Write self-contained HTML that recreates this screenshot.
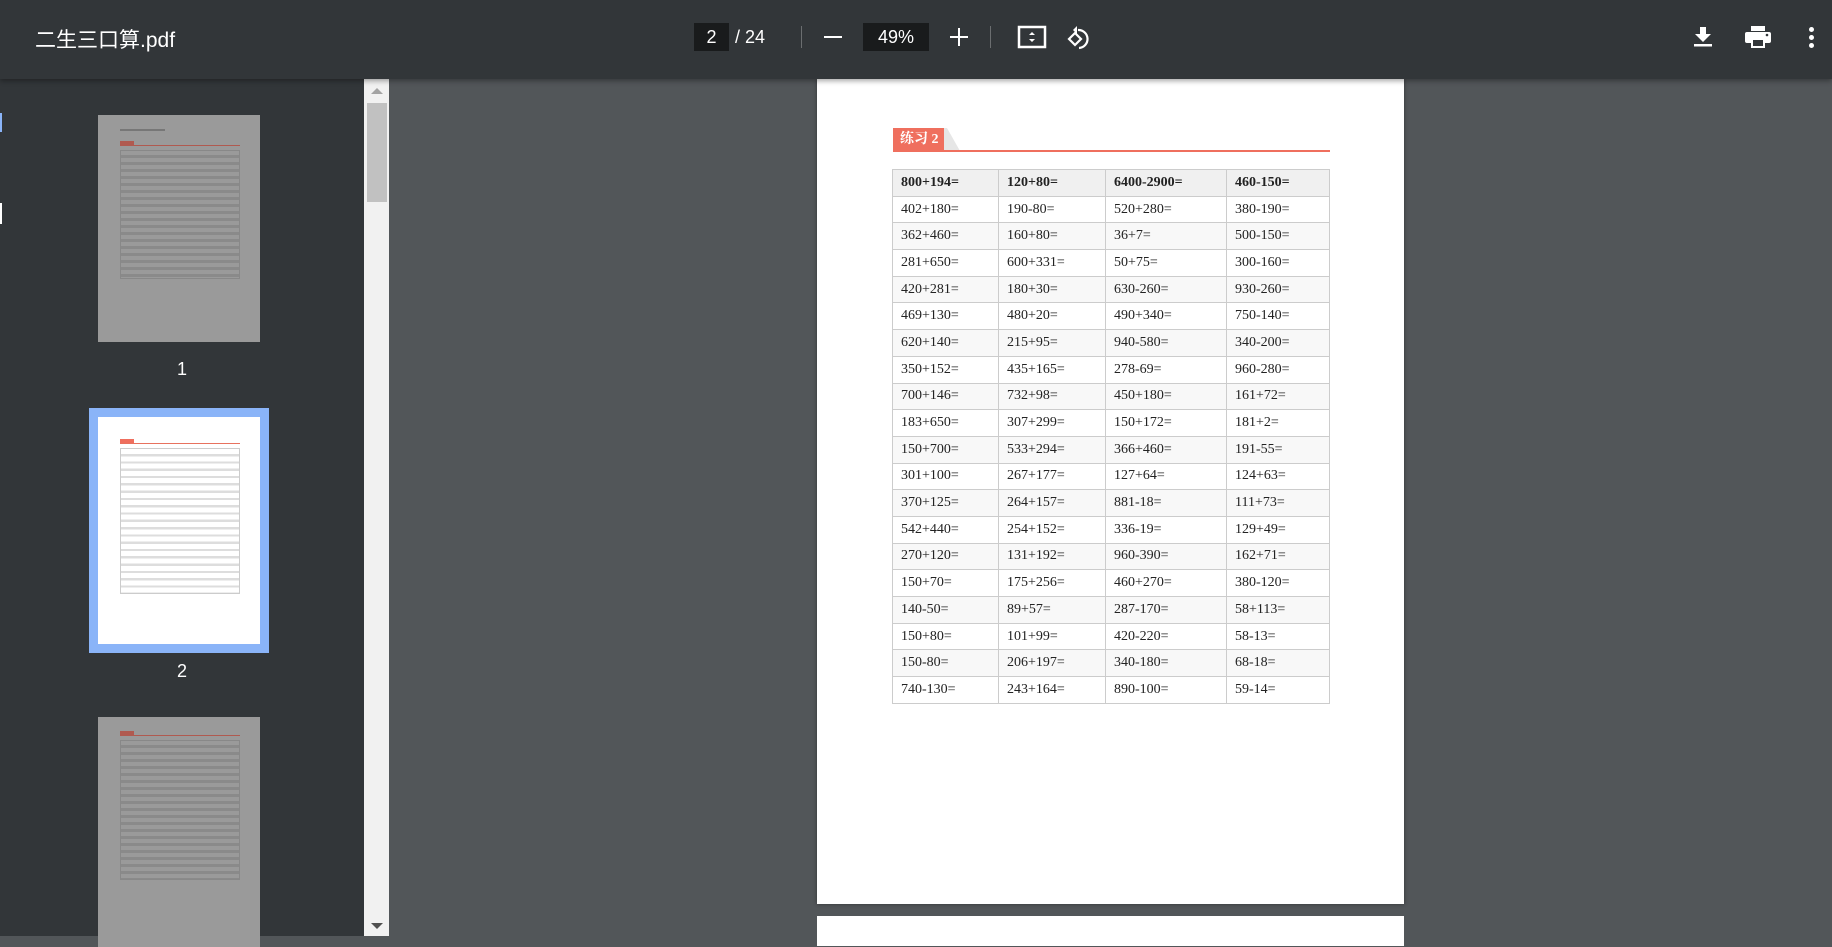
<!DOCTYPE html>
<html><head><meta charset="utf-8"><style>
*{margin:0;padding:0;box-sizing:border-box}
body{width:1832px;height:936px;overflow:hidden;background:#525659;font-family:"Liberation Sans","Noto Sans CJK SC",sans-serif;position:relative}
#tb{position:absolute;left:0;top:0;width:1832px;height:79px;background:#323639;color:#fff;z-index:5;box-shadow:0 2px 5px rgba(0,0,0,.35)}
.a{position:absolute}
#side{position:absolute;left:0;top:79px;width:364px;height:857px;background:#323639}
#sb{position:absolute;left:364px;top:79px;width:25px;height:857px;background:#f1f1f1}
.th{position:absolute;left:98px;width:162px;background:#9a9a9a}
.lines{position:absolute;left:22px;width:120px;background:repeating-linear-gradient(transparent 0,transparent 4px,#8a8a8a 4px,#8a8a8a 7px);border:1px solid #888}
.lbl{position:absolute;width:100%;left:0;text-align:center;color:#fff;font-size:18px}
#page{position:absolute;left:817px;top:79px;width:587px;height:825px;background:#fff;box-shadow:0 0 4px rgba(0,0,0,.4)}
table{position:absolute;left:75px;top:90px;width:438px;border-collapse:collapse;font-family:"Liberation Serif",serif;font-size:14px;color:#222}
td{border:1px solid #ccc;height:26.7px;padding:0 0 0 8px}
tr:nth-child(odd){background:#f8f8f8}
tr:first-child{background:#f0f0f0;font-weight:bold}
</style></head><body>
<div id="tb">
<div class="a" style="left:35px;top:24px;font-size:21px">二生三口算.pdf</div>
<div class="a" style="left:694px;top:23px;width:35px;height:28px;background:#191b1c;font-size:18px;text-align:center;line-height:28px">2</div>
<div class="a" style="left:735px;top:23px;font-size:18px;line-height:28px">/ 24</div>
<div class="a" style="left:801px;top:26px;width:1px;height:22px;background:#6b6e70"></div>
<div class="a" style="left:824px;top:36px;width:18px;height:2px;background:#fff"></div>
<div class="a" style="left:863px;top:23px;width:66px;height:28px;background:#191b1c;font-size:18px;text-align:center;line-height:28px">49%</div>
<div class="a" style="left:950px;top:36px;width:18px;height:2px;background:#fff"></div>
<div class="a" style="left:958px;top:28px;width:2px;height:18px;background:#fff"></div>
<div class="a" style="left:990px;top:26px;width:1px;height:22px;background:#6b6e70"></div>
<svg class="a" style="left:1017px;top:25px" width="30" height="24" viewBox="0 0 30 24"><rect x="2" y="2" width="26" height="20" fill="none" stroke="#fff" stroke-width="2.5"/><path d="M12 10l3-3 3 3zM12 14l3 3 3-3z" fill="#fff"/></svg>
<svg class="a" style="left:1065px;top:24px" width="30" height="28" viewBox="0 0 30 28"><path d="M4 15l6-6 6 6-6 6z" fill="none" stroke="#fff" stroke-width="2.2"/><path d="M13 6a9 9 0 1 1 1 18" fill="none" stroke="#fff" stroke-width="2.2"/><path d="M12 2v8h0l-4-4z" fill="#fff"/></svg>
<svg class="a" style="left:1693px;top:26px" width="20" height="22" viewBox="0 0 20 22"><path d="M7 1h6v7h5l-8 8-8-8h5z" fill="#fff"/><rect x="1" y="18" width="18" height="2.5" fill="#fff"/></svg>
<svg class="a" style="left:1744px;top:25px" width="28" height="24" viewBox="0 0 28 24"><rect x="7" y="1" width="14" height="5" fill="#fff"/><rect x="1" y="7" width="26" height="11" rx="2" fill="#fff"/><rect x="7" y="13" width="14" height="10" fill="#fff"/><rect x="9" y="15" width="10" height="6" fill="#323639"/><circle cx="23" cy="10" r="1.3" fill="#323639"/></svg>
<div class="a" style="left:1809px;top:27px;width:5px;height:5px;border-radius:50%;background:#fff"></div>
<div class="a" style="left:1809px;top:35px;width:5px;height:5px;border-radius:50%;background:#fff"></div>
<div class="a" style="left:1809px;top:43px;width:5px;height:5px;border-radius:50%;background:#fff"></div>
</div>
<div id="side">
<div class="a" style="left:0;top:34px;width:2px;height:19px;background:#8ab4f8"></div>
<div class="a" style="left:0;top:124px;width:2px;height:21px;background:#fff"></div>
<div class="th" style="top:36px;height:227px">
<div class="a" style="left:22px;top:14px;width:45px;height:2px;background:#777"></div>
<div class="a" style="left:22px;top:26px;width:14px;height:4px;background:#b05a50"></div>
<div class="a" style="left:22px;top:30px;width:120px;height:1px;background:#b05a50"></div>
<div class="lines" style="top:35px;height:129px"></div>
</div>
<div class="lbl" style="top:280px">1</div>
<div class="a" style="left:89px;top:329px;width:180px;height:245px;background:#8ab4f8"></div>
<div class="a" style="left:98px;top:338px;width:162px;height:227px;background:#fff">
<div class="a" style="left:22px;top:22px;width:14px;height:4px;background:#ef6f5e"></div>
<div class="a" style="left:22px;top:26px;width:120px;height:1px;background:#e8725f"></div>
<div class="a" style="left:22px;top:31px;width:120px;height:146px;border:1px solid #ccc;background:repeating-linear-gradient(#fff 0,#fff 5px,#ddd 5px,#ddd 7.3px)"></div>
</div>
<div class="lbl" style="top:582px">2</div>
<div class="th" style="top:638px;height:230px">
<div class="a" style="left:22px;top:14px;width:14px;height:4px;background:#b05a50"></div>
<div class="a" style="left:22px;top:18px;width:120px;height:1px;background:#b05a50"></div>
<div class="lines" style="top:23px;height:140px"></div>
</div>
</div>
<div id="sb">
<svg class="a" style="left:7px;top:8px" width="12" height="8"><path d="M0 7L6 1 12 7z" fill="#a3a3a3"/></svg>
<div class="a" style="left:3px;top:24px;width:20px;height:99px;background:#c1c1c1"></div>
<svg class="a" style="left:7px;top:843px" width="12" height="8"><path d="M0 1L6 7 12 1z" fill="#505050"/></svg>
</div>
<div id="page">
<div class="a" style="left:76px;top:49px;width:51px;height:23px;background:#ef6f5e;color:#fff;font-family:'Liberation Serif','Noto Serif CJK SC',serif;font-size:14px;font-weight:bold;line-height:23px;padding-left:7px">练习 2</div>
<svg class="a" style="left:127px;top:49px" width="18" height="24"><path d="M0 0L3 0 16 23 0 23z" fill="#e6e6e6"/></svg>
<div class="a" style="left:76px;top:71px;width:437px;height:2px;background:#ef6f5e"></div>
<table>
<colgroup><col style="width:106px"><col style="width:107px"><col style="width:121px"><col></colgroup>
<tr><td>800+194=</td><td>120+80=</td><td>6400-2900=</td><td>460-150=</td></tr>
<tr><td>402+180=</td><td>190-80=</td><td>520+280=</td><td>380-190=</td></tr>
<tr><td>362+460=</td><td>160+80=</td><td>36+7=</td><td>500-150=</td></tr>
<tr><td>281+650=</td><td>600+331=</td><td>50+75=</td><td>300-160=</td></tr>
<tr><td>420+281=</td><td>180+30=</td><td>630-260=</td><td>930-260=</td></tr>
<tr><td>469+130=</td><td>480+20=</td><td>490+340=</td><td>750-140=</td></tr>
<tr><td>620+140=</td><td>215+95=</td><td>940-580=</td><td>340-200=</td></tr>
<tr><td>350+152=</td><td>435+165=</td><td>278-69=</td><td>960-280=</td></tr>
<tr><td>700+146=</td><td>732+98=</td><td>450+180=</td><td>161+72=</td></tr>
<tr><td>183+650=</td><td>307+299=</td><td>150+172=</td><td>181+2=</td></tr>
<tr><td>150+700=</td><td>533+294=</td><td>366+460=</td><td>191-55=</td></tr>
<tr><td>301+100=</td><td>267+177=</td><td>127+64=</td><td>124+63=</td></tr>
<tr><td>370+125=</td><td>264+157=</td><td>881-18=</td><td>111+73=</td></tr>
<tr><td>542+440=</td><td>254+152=</td><td>336-19=</td><td>129+49=</td></tr>
<tr><td>270+120=</td><td>131+192=</td><td>960-390=</td><td>162+71=</td></tr>
<tr><td>150+70=</td><td>175+256=</td><td>460+270=</td><td>380-120=</td></tr>
<tr><td>140-50=</td><td>89+57=</td><td>287-170=</td><td>58+113=</td></tr>
<tr><td>150+80=</td><td>101+99=</td><td>420-220=</td><td>58-13=</td></tr>
<tr><td>150-80=</td><td>206+197=</td><td>340-180=</td><td>68-18=</td></tr>
<tr><td>740-130=</td><td>243+164=</td><td>890-100=</td><td>59-14=</td></tr>
</table>
</div>
<div class="a" style="left:817px;top:916px;width:587px;height:30px;background:#fff"></div>
</body></html>
